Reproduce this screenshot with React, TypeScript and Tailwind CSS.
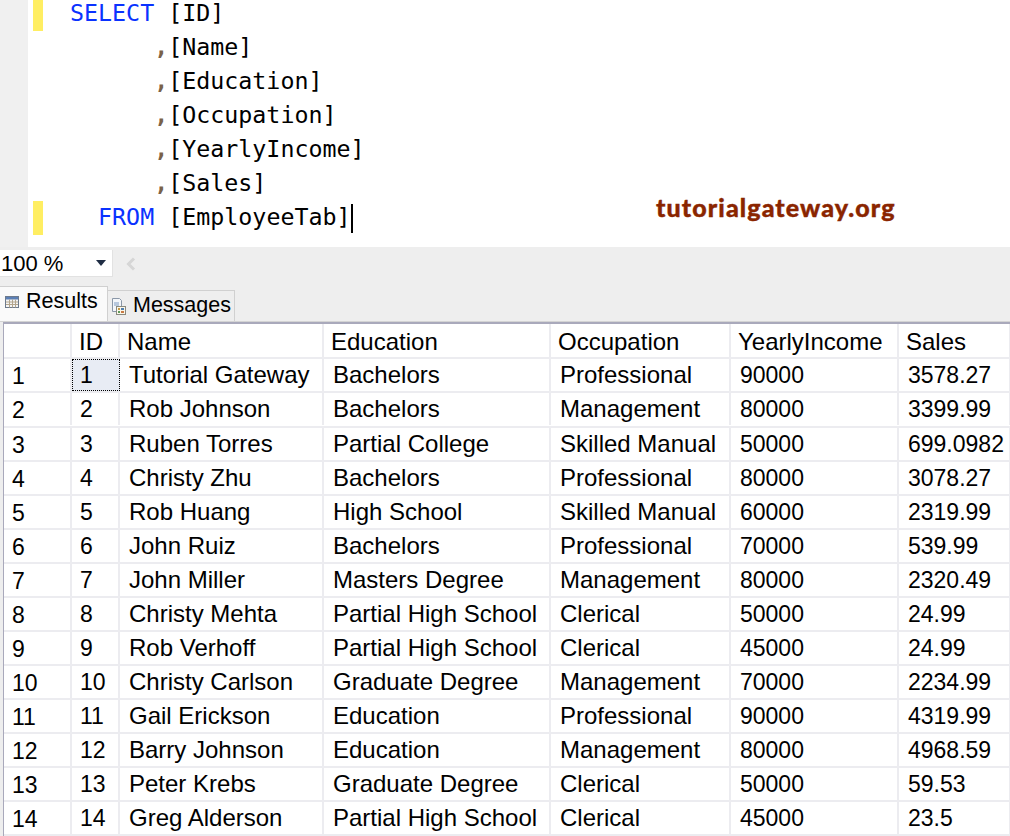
const sqlLines = [
  { keyword: "SELECT", indent: "", rest: " [ID]", bar: true },
  { comma: true, rest: "[Name]" },
  { comma: true, rest: "[Education]" },
  { comma: true, rest: "[Occupation]" },
  { comma: true, rest: "[YearlyIncome]" },
  { comma: true, rest: "[Sales]" },
  { keyword: "FROM", indent: "  ", rest: " [EmployeeTab]", bar: true, caret: true },
];

const rows = [
  ["Tutorial Gateway", "Bachelors", "Professional", "90000", "3578.27"],
  ["Rob Johnson", "Bachelors", "Management", "80000", "3399.99"],
  ["Ruben Torres", "Partial College", "Skilled Manual", "50000", "699.0982"],
  ["Christy Zhu", "Bachelors", "Professional", "80000", "3078.27"],
  ["Rob Huang", "High School", "Skilled Manual", "60000", "2319.99"],
  ["John Ruiz", "Bachelors", "Professional", "70000", "539.99"],
  ["John Miller", "Masters Degree", "Management", "80000", "2320.49"],
  ["Christy Mehta", "Partial High School", "Clerical", "50000", "24.99"],
  ["Rob Verhoff", "Partial High School", "Clerical", "45000", "24.99"],
  ["Christy Carlson", "Graduate Degree", "Management", "70000", "2234.99"],
  ["Gail Erickson", "Education", "Professional", "90000", "4319.99"],
  ["Barry Johnson", "Education", "Management", "80000", "4968.59"],
  ["Peter Krebs", "Graduate Degree", "Clerical", "50000", "59.53"],
  ["Greg Alderson", "Partial High School", "Clerical", "45000", "23.5"],
];

const headers = ["ID", "Name", "Education", "Occupation", "YearlyIncome", "Sales"];
const gridCols = "grid grid-cols-[68px_48px_204px_227px_180px_168px_112px]";

const ResultsIcon = () => (
  <svg width="14" height="12" viewBox="0 0 14 12" className="shrink-0">
    <rect x="0.5" y="0.5" width="13" height="11" fill="#f4f4f4" stroke="#6d7a8c" />
    <rect x="1" y="1" width="12" height="2.5" fill="#5b7fb5" />
    <path d="M1 6h12M1 8.5h12M4.5 3.5v8M7.5 3.5v8M10.5 3.5v8" stroke="#b3a58d" strokeWidth="1" />
  </svg>
);

const MessagesIcon = () => (
  <svg width="15" height="17" viewBox="0 0 15 17" className="shrink-0">
    <path d="M1.5 0.5h7l2 2v11h-9z" fill="#f3f6fa" stroke="#8b98a8" />
    <path d="M3 5h5M3 7h5" stroke="#7d9ac0" />
    <rect x="5.5" y="8.5" width="9" height="8" fill="#fbf7ea" stroke="#8a8a80" />
    <rect x="7" y="10" width="2" height="2" fill="#c99a45" />
    <rect x="10" y="10" width="3" height="2" fill="#4f7fb0" />
    <rect x="7" y="13" width="2" height="2" fill="#5f9a5a" />
    <rect x="10" y="13" width="3" height="2" fill="#c97a45" />
  </svg>
);

export default function App() {
  return (
    <div className="w-[1010px] h-[836px] overflow-hidden bg-[#eeeeee] font-['Liberation_Sans',Arial,sans-serif] text-black">
      {/* Editor */}
      <div className="relative flex h-[247px] bg-white overflow-hidden">
        <div className="w-[28px] shrink-0 bg-[#f0f0f0]" />
        <div className="-mt-[3px]">
          {sqlLines.map((line, i) => (
            <div key={i} className="flex h-[34px] items-stretch">
              <div className={line.bar ? "ml-[5px] w-[10px] bg-[#ffee62]" : "ml-[5px] w-[10px]"} />
              <div className="ml-[27px] whitespace-pre font-['DejaVu_Sans_Mono',monospace] text-[23.3px] leading-[32px]">
                {line.comma ? (
                  <>
                    {"      "}
                    <span className="font-bold text-[#7a6248]">,</span>
                    {line.rest}
                  </>
                ) : (
                  <>
                    {line.indent}
                    <span className="text-[#0a32ff]">{line.keyword}</span>
                    {line.rest}
                  </>
                )}
                {line.caret && <span className="inline-block h-[29px] w-[2px] bg-black align-middle" />}
              </div>
            </div>
          ))}
        </div>
        {/* Watermark */}
        <div className="absolute left-[656px] top-[191px] font-['Lato',sans-serif] text-[25px] leading-[32px] font-black tracking-[1.1px] text-[#8a2500] [-webkit-text-stroke:0.4px_#8a2500]">
          tutorialgateway.org
        </div>
      </div>

      {/* Zoom bar */}
      <div className="flex h-[31px] items-center pt-[2px]">
        <div className="flex h-[27px] w-[113px] items-center justify-between border-r border-b border-[#e2e2e2] bg-white pr-[6px] text-[22px] leading-none">
          <span className="pl-[1px] pt-[2px]">100 %</span>
          <span className="h-0 w-0 border-x-[5.5px] border-t-[6px] border-x-transparent border-t-[#1f2d44]" />
        </div>
        <svg width="10" height="14" viewBox="0 0 10 14" className="ml-[13px]">
          <path d="M8 1.5 2.5 7 8 12.5" fill="none" stroke="#d6d6d6" strokeWidth="3" />
        </svg>
      </div>

      {/* Tabs */}
      <div className="flex h-[44px] items-end border-b border-[#d4d4d4]">
        <div className="flex h-[35px] w-[108px] items-center gap-[7px] border-r border-t border-[#d0d0d0] bg-[#fafafa] pl-[5px] pb-[5px] text-[21.5px] leading-none">
          <ResultsIcon />
          <span>Results</span>
        </div>
        <div className="flex h-[31px] w-[127px] items-center gap-[7px] border-r border-t border-[#d0d0d0] pl-[3px] text-[21.5px] leading-none">
          <MessagesIcon />
          <span>Messages</span>
        </div>
      </div>

      {/* Results grid */}
      <div className="ml-[3px] border-t-2 border-l border-[#a9a9bb] bg-white">
        <div className={`${gridCols} h-[35px] border-b-2 border-[#ececf0]`}>
          <div className="border-r-2 border-[#ececf0]" />
          {headers.map((h) => (
            <div key={h} className="flex items-center border-r-2 border-[#ececf0] pl-[7px] pt-[3px] text-[24px] leading-none">
              {h}
            </div>
          ))}
        </div>
        {rows.map((row, i) => (
          <div key={i} className={`${gridCols} ${i === 1 ? "h-[35px] pb-[1px]" : "h-[34px]"} border-b-2 border-[#ececf0]`}>
            <div className="flex items-center border-r-2 border-[#ececf0] pl-[8px] pt-[2px] text-[23px] leading-none">
              {i + 1}
            </div>
            <div
              className={
                i === 0
                  ? "flex items-center border border-dotted border-black bg-[#e8ecf4] pl-[7px] text-[23px] leading-none"
                  : "flex items-center border-r-2 border-[#ececf0] pl-[8px] text-[23px] leading-none"
              }
            >
              {i + 1}
            </div>
            {row.map((cell, j) => (
              <div
                key={j}
                className={`flex items-center border-r-2 border-[#ececf0] whitespace-nowrap leading-none pl-[9px] ${j > 2 ? "text-[23px]" : "text-[24px]"}`}
              >
                {cell}
              </div>
            ))}
          </div>
        ))}
      </div>
    </div>
  );
}
